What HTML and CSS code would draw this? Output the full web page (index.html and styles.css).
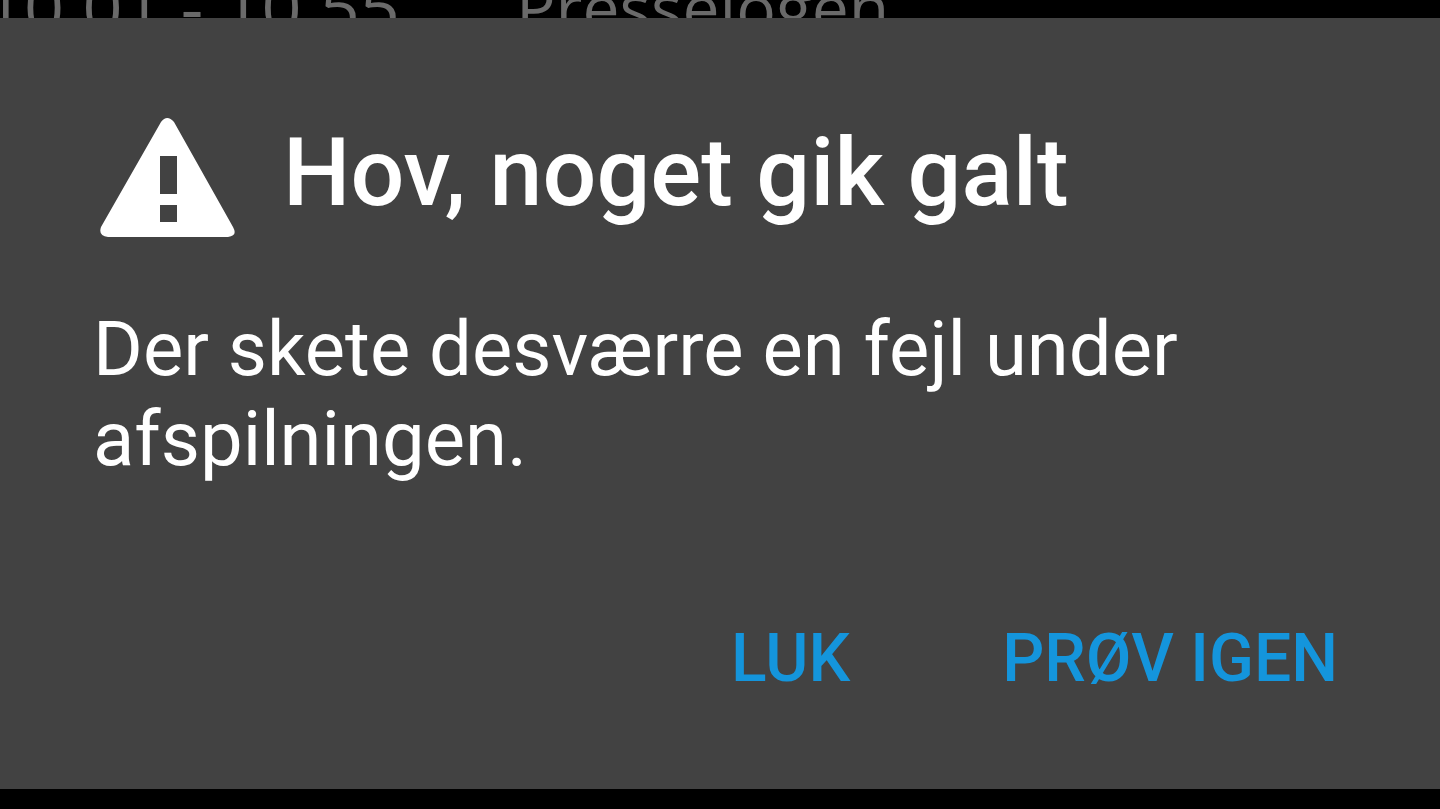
FILE: index.html
```html
<!DOCTYPE html>
<html lang="da">
<head>
<meta charset="utf-8">
<title>Hov, noget gik galt</title>
<link rel="stylesheet" href="styles.css">
</head>
<body>
<div class="programme"><span class="time">10.01 - 10.55</span><span class="show">Presselogen</span></div>
<main class="dialog" role="alertdialog" aria-labelledby="title" aria-describedby="message">
<header class="heading">
<svg class="warning" viewBox="0 0 136 120" aria-hidden="true"><path fill="#fff" fill-rule="evenodd" d="M61 4Q67-4 74 4L133 109Q138 118 128 119H8Q-2 118 1 109ZM60 38V76H77V38ZM60 87V104H77V87Z"/></svg>
<h1 class="title" id="title">Hov, noget gik galt</h1>
</header>
<p class="message" id="message">Der skete desværre en fejl under afspilningen.</p>
<div class="actions"><button class="action" type="button">LUK</button><button class="action" type="button">PRØV IGEN</button></div>
</main>
</body>
</html>
```
FILE: styles.css
```css
* { box-sizing: border-box; }
body {
  margin: 0;
  min-height: 100vh;
  display: flex;
  flex-direction: column;
  background: #000;
  font-family: Roboto, sans-serif;
  overflow: hidden;
}
.programme {
  height: 18px;
  display: flex;
  align-items: flex-end;
  gap: 116px;
  margin-left: -16px;
  color: #6a6a6a;
  font-family: "Open Sans", sans-serif;
  font-size: 66px;
  line-height: 72px;
  white-space: nowrap;
}
.time, .show { flex: none; margin-bottom: -24px; }
.time { font-size: 70px; }
.dialog {
  position: relative;
  flex: 1;
  display: flex;
  flex-direction: column;
  margin-bottom: 20px;
  padding: 100px 70px 84px 93px;
  background: #424242;
  color: #fff;
}
.heading {
  display: flex;
  align-items: flex-start;
  gap: 47px;
  padding-left: 7px;
}
.warning { width: 136px; height: 120px; flex: none; }
.title {
  margin: 0;
  font-size: 95px;
  font-weight: 500;
  line-height: 110px;
}
.message {
  margin: 66px 0 0;
  font-size: 76px;
  line-height: 90px;
}
.actions {
  margin-top: auto;
  display: flex;
  justify-content: flex-end;
  gap: 88px;
}
.action {
  border: 0;
  padding: 0 32px;
  background: none;
  color: #1495dc;
  font-family: inherit;
  font-size: 66px;
  font-weight: 500;
  line-height: 92px;
}
```
